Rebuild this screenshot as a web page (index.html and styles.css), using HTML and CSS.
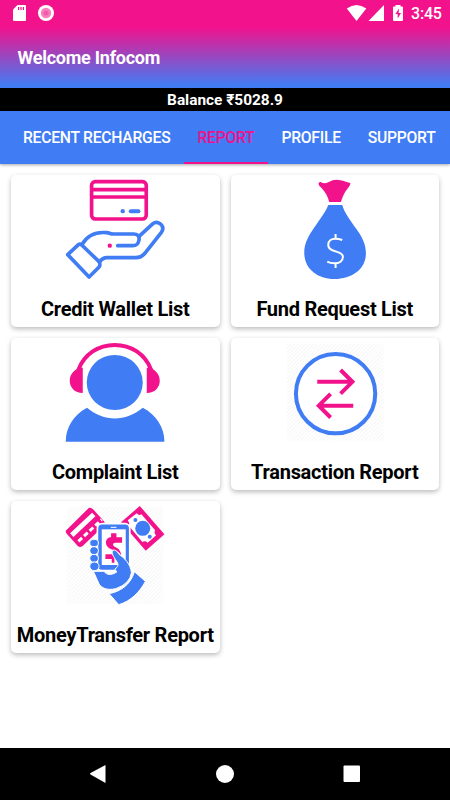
FILE: index.html
```html
<!DOCTYPE html>
<html lang="en">
<head>
    <meta charset="UTF-8">
    <meta name="viewport" content="width=device-width, initial-scale=1.0">
    <title>Welcome Infocom</title>
    <link rel="stylesheet" href="styles.css">
</head>
<body>
    <header>
        <div class="status-bar">
            <svg class="status-left" width="60" height="26" viewBox="0 0 60 26">
                <path fill="#fff" d="M17.5 5H25a1 1 0 0 1 1 1v14a1 1 0 0 1-1 1H14a1 1 0 0 1-1-1V9.5z"/>
                <path stroke="#f2128c" stroke-width="1.2" d="M18.6 7v3M21 7v3M23.4 7v3"/>
                <circle cx="46" cy="13" r="8" fill="#fff"/>
                <circle cx="46" cy="13" r="5.2" fill="#f77fbf"/>
                <circle cx="46" cy="13" r="2.6" fill="#f45aab"/>
            </svg>
            <svg class="status-right" width="62" height="26" viewBox="345 0 62 26">
                <g fill="#fff">
                    <path d="M356.500 21L346.800 8.500Q356.500 1.500 366.300 8.500z"/>
                    <path d="M384 5v16h-15.500z"/>
                    <path d="M395.500 5h5v1.600h1.500a1 1 0 0 1 1 1V20a1 1 0 0 1-1 1h-8a1 1 0 0 1-1-1V7.600a1 1 0 0 1 1-1h1.500z"/>
                </g>
                <path fill="#f2128c" d="M399 8.500l-3.600 5.500h2.300v4.500l3.300-5.600h-2.400z"/>
            </svg>
            <span class="clock">3:45</span>
        </div>
        <h1>Welcome Infocom</h1>
    </header>

    <div class="balance">Balance ₹5028.9</div>

    <nav>
        <a href="#" class="tab">RECENT RECHARGES</a>
        <a href="#" class="tab active">REPORT</a>
        <a href="#" class="tab">PROFILE</a>
        <a href="#" class="tab">SUPPORT</a>
    </nav>

    <main>
        <div class="card">
            <svg class="icon" viewBox="189.75 30 312 330">
                <g fill="none" stroke="#f2128c" stroke-width="11">
                    <rect x="275.500" y="50" width="164" height="112" rx="11"/>
                    <path d="M276 74h163M276 96h163"/>
                </g>
                <g fill="none" stroke="#407df4" stroke-width="11" stroke-linejoin="round" stroke-linecap="round">
                    <path d="M393 138.500h23" stroke-width="12"/>
                    <path d="M204 269l32-30q5-3 10 1l52 50q3 4 2 12l-2 4-30 30z"/>
                    <path d="M247 238c17-29 45-38 74-35 9 1 12 4 19 4h62c12 0 17 7 16 16l-1 5c-2 9-8 14-18 14h-45"/>
                    <path d="M418 214l39-36c8-8 17-7 24-2 9 7 10 17 4 26l-48 61c-8 11-17 15-29 15h-87c-11 0-15 4-22 13"/>
                </g>
                <circle cx="369" cy="138.500" r="6.500" fill="#407df4"/>
                <circle cx="330" cy="242" r="6.500" fill="#f2128c"/>
            </svg>
            <h2>Credit Wallet List</h2>
        </div>

        <div class="card">
            <svg class="icon" viewBox="173.25 30 312 330">
                <path fill="#f2128c" d="M280 56q0-6 6-5c8 5 15 5 23 1 14-8 24-9 37-6 9 2 18 6 29 8 1 8-8 16-14 25-6 10-10 20-14 32h-35c-4-16-11-29-21-40-6-7-11-9-11-15z"/>
                <path fill="#407df4" d="M309 120h42c6 22 24 47 42 71 17 24 29 45 29 74 0 48-42 77-95 77-50 0-90-30-90-79 0-29 13-50 29-74 17-25 36-49 43-69z"/>
                <g fill="none" stroke="#fff" stroke-width="6">
                    <path d="M351 225c-8-3-14-4-21-4-12 0-21 7-21 18 0 25 44 17 44 36 0 13-11 20-25 20-9 0-15-1-22-5"/>
                    <path d="M331 207v15M331 294v15"/>
                </g>
            </svg>
            <h2>Fund Request List</h2>
        </div>

        <div class="card">
            <svg class="icon" viewBox="189.75 24 312 330">
                <path fill="none" stroke="#f2128c" stroke-width="12" d="M236 119c18-47 60-74 109-74s91 27 109 74"/>
                <path fill="#f2128c" d="M249 113v76c-24 0-39-17-39-37 0-15 8-26 20-34l5-5zM441 113v76c24 0 39-17 39-37 0-15-8-26-20-34l-5-5z"/>
                <g fill="#407df4">
                    <ellipse cx="345" cy="157.500" rx="84" ry="82.500"/>
                    <path d="M262 233c51 43 115 43 167 0 40 21 65 58 65 102H198c0-44 24-81 64-102z"/>
                </g>
            </svg>
            <h2>Complaint List</h2>
        </div>

        <div class="card">
            <svg class="icon" viewBox="173.25 24 312 330">
                <defs>
                    <pattern id="stripes" width="8" height="8" patternUnits="userSpaceOnUse" patternTransform="rotate(45)">
                        <path d="M1 0v8" stroke="#f1f1f1" stroke-width="2"/>
                    </pattern>
                </defs>
                <rect x="184" y="41" width="291" height="291" fill="url(#stripes)"/>
                <circle cx="331" cy="191" r="119" fill="#fff" stroke="#407df4" stroke-width="12"/>
                <path fill="none" stroke="#f2128c" stroke-width="12" d="M276 155.500h106M346 120l35.500 35.500L346 191M384 227H282M316 191.500L280.500 227l35.500 35.500"/>
            </svg>
            <h2>Transaction Report</h2>
        </div>

        <div class="card">
            <svg class="icon" viewBox="189.75 18 312 330">
                <rect x="201" y="36" width="290" height="290" fill="url(#stripes)"/>

                <!-- bank card -->
                <path fill="#f2128c" d="M198 107q-1 5 3 9l33 37q6 6 14 1l64-61c5-5 4-10 0-15l-32-35q-6-6-13-4z"/>
                <path fill="#fff" d="M211 115l66-62 10 11-66 62z"/>
                <path stroke="#fff" stroke-width="9" stroke-dasharray="15 8" d="M236 139l70-65"/>

                <!-- bank note -->
                <path fill="#f2128c" d="M420 33l74 85-56 49-74-85z"/>
                <path fill="#fff" d="M411 55q6 8 14 3l41 48q-4 9 3 15l-25 22q-8-7-16-2l-41-49q4-8-3-16z"/>
                <g fill="#407df4">
                    <circle cx="429" cy="100" r="22.500"/>
                    <circle cx="407" cy="75" r="6"/>
                    <circle cx="450" cy="125" r="6"/>
                </g>

                <!-- phone in hand -->
                <rect x="293" y="86" width="97" height="141" rx="14" fill="#407df4" stroke="#fff" stroke-width="5"/>
                <path fill="#fff" d="M306 103h72v107h-72z"/>
                <path stroke="#fff" stroke-width="3" d="M333 97h17"/>
                <path fill="#f2128c" d="M334 115h16v12h17v16h-20c-9 1-9 8-2 12 12 5 19 13 19 27-7-15-17-15-29-19-19-6-23-29-5-36h4zM317 178h27v25h-8v-11h-19z"/>
                <g fill="#407df4" stroke="#fff" stroke-width="3">
                    <ellipse cx="283" cy="144" rx="13" ry="11"/>
                    <ellipse cx="283" cy="167" rx="13" ry="12"/>
                    <ellipse cx="283" cy="190" rx="13" ry="12"/>
                    <ellipse cx="284" cy="214" rx="14" ry="13"/>
                    <path d="M281 229h31c10 12 24 12 39 2l-6-9c12-7 12-14 5-24-9-13-16-24-11-31 7-6 14 4 20 12 14 9 34 28 36 54q-4 33-47 48c-27 6-42-2-50-14z"/>
                    <path d="M404 230l33 29c-16 31-44 60-80 70l-29-33c32-6 64-25 76-66z"/>
                </g>
            </svg>
            <h2>MoneyTransfer Report</h2>
        </div>
    </main>

    <footer>
        <svg width="450" height="52" viewBox="0 748 450 52" fill="#fff">
            <path d="M105.500 765v18L90.500 774.500q-1-.7 0-1.400z"/>
            <circle cx="225" cy="774" r="9"/>
            <rect x="343.500" y="765.500" width="16.500" height="16.500" rx="1"/>
        </svg>
    </footer>
</body>
</html>
```
FILE: styles.css
```css
* {
    box-sizing: border-box;
}

body {
    font-family: Roboto, sans-serif;
    margin: 0;
    height: 800px;
    display: flex;
    flex-direction: column;
    background-color: #fff;
    overflow: hidden;
}

header {
    height: 88px;
    color: white;
    background: linear-gradient(#f2128c 27px, #407df4 86px);
}

.status-bar {
    display: flex;
    height: 27px;
}

.status-right {
    margin-left: auto;
}

.clock {
    width: 43px;
    padding-left: 4px;
    font-size: 16px;
    font-weight: 500;
    line-height: 28px;
    letter-spacing: -0.2px;
}

h1 {
    margin: 18px 0 0 17.5px;
    font-size: 18px;
    font-weight: 700;
    line-height: 26px;
    letter-spacing: -0.25px;
}

.balance {
    height: 23px;
    background-color: #000;
    color: white;
    font-size: 15.4px;
    font-weight: 700;
    line-height: 25px;
    text-align: center;
}

nav {
    display: flex;
    height: 53px;
    padding-left: 9.5px;
    background-color: #407df4;
    box-shadow: 0 1px 3px rgba(0, 0, 0, 0.35);
}

.tab {
    flex: none;
    padding: 0 13.5px;
    color: white;
    font-size: 15.7px;
    font-weight: 500;
    line-height: 54px;
    letter-spacing: -0.25px;
    text-decoration: none;
    white-space: nowrap;
}

.tab.active {
    color: #f2128c;
    border-bottom: 2px solid #f2128c;
}

main {
    flex: 1;
    display: grid;
    grid-template-columns: 208.5px 208.5px;
    grid-auto-rows: 152px;
    gap: 11px;
    padding: 10.5px 11px;
}

.card {
    display: flex;
    flex-direction: column;
    align-items: center;
    background-color: #fff;
    border-radius: 5px;
    box-shadow: 0 2px 5px rgba(0, 0, 0, 0.27);
}

.icon {
    width: 104px;
    height: 110px;
}

h2 {
    margin: 11px 0 0;
    color: #000;
    font-size: 20px;
    font-weight: 700;
    line-height: 26px;
    letter-spacing: -0.28px;
    white-space: nowrap;
}

footer {
    height: 52px;
    background-color: #000;
}
```
